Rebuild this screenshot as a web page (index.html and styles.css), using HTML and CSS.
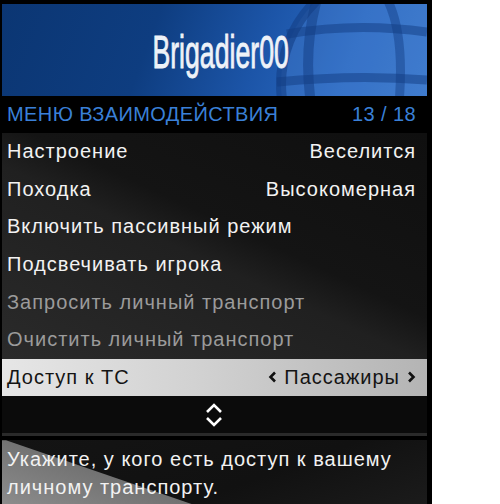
FILE: index.html
```html
<!DOCTYPE html>
<html lang="ru">

<head>
    <meta charset="UTF-8">
    <meta name="viewport" content="width=device-width, initial-scale=1.0">
    <title>Меню взаимодействия</title>
    <link rel="stylesheet" href="styles.css">
</head>

<body>
    <div class="menu">
        <div class="banner">
            <svg class="globe" width="160" height="92" viewBox="0 0 160 92">
                <circle cx="130" cy="80" r="116" fill="rgba(110,160,235,0.18)" stroke="rgba(18,60,130,0.55)" stroke-width="10"/>
                <path d="M20 30 Q90 18 160 28" fill="none" stroke="rgba(18,60,130,0.5)" stroke-width="9"/>
                <path d="M10 78 Q90 70 160 76" fill="none" stroke="rgba(18,60,130,0.5)" stroke-width="9"/>
                <path d="M50 -5 Q36 45 44 100" fill="none" stroke="rgba(18,60,130,0.5)" stroke-width="10"/>
                <path d="M120 -5 Q138 30 132 100" fill="none" stroke="rgba(18,60,130,0.45)" stroke-width="9"/>
            </svg>
            <span class="title">Brigadier00</span>
        </div>

        <div class="header">
            <span>МЕНЮ ВЗАИМОДЕЙСТВИЯ</span>
            <span>13 / 18</span>
        </div>

        <div class="items">
            <div class="item"><span>Настроение</span><span>Веселится</span></div>
            <div class="item"><span>Походка</span><span>Высокомерная</span></div>
            <div class="item"><span>Включить пассивный режим</span></div>
            <div class="item"><span>Подсвечивать игрока</span></div>
            <div class="item disabled"><span>Запросить личный транспорт</span></div>
            <div class="item disabled"><span>Очистить личный транспорт</span></div>
            <div class="item selected">
                <span>Доступ к ТС</span>
                <span class="choice">
                    <svg width="9" height="12" viewBox="0 0 9 12"><path d="M7 1.5 L2.5 6 L7 10.5" fill="none" stroke="#111" stroke-width="2.6"/></svg>
                    <span>Пассажиры</span>
                    <svg width="9" height="12" viewBox="0 0 9 12"><path d="M2 1.5 L6.5 6 L2 10.5" fill="none" stroke="#111" stroke-width="2.6"/></svg>
                </span>
            </div>
        </div>

        <div class="scroll">
            <svg width="18" height="26" viewBox="0 0 18 26">
                <path d="M2 10 L9 3 L16 10" fill="none" stroke="#fff" stroke-width="2.6"/>
                <path d="M2 16 L9 23 L16 16" fill="none" stroke="#fff" stroke-width="2.6"/>
            </svg>
        </div>
        <div class="separator"></div>

        <div class="description">
            <span class="description-text">Укажите, у кого есть доступ к вашему личному транспорту.</span>
        </div>
    </div>
</body>

</html>
```

FILE: styles.css
```css
body {
    margin: 0;
    padding: 0;
    background-color: #fff;
    font-family: "Liberation Sans", Arial, sans-serif;
}

.menu {
    width: 425px;
    height: 500px;
    padding: 4px 5px 0 2px;
    background-color: #000;
    color: #f0f0f0;
    overflow: hidden;
}

.banner {
    position: relative;
    height: 92px;
    display: flex;
    align-items: center;
    justify-content: center;
    overflow: hidden;
    background: linear-gradient(110deg, #0b3673 0%, #0e3d80 35%, #1c55a8 60%, #2a68c0 80%, #3674c8 100%);
}

.globe {
    position: absolute;
    right: 0;
    top: 0;
}

.title {
    position: relative;
    display: inline-block;
    margin-left: 12px;
    margin-top: 4px;
    font-size: 46px;
    color: #eef2f8;
    -webkit-text-stroke: 0.9px #eef2f8;
    transform: scaleX(0.58);
}

.header {
    height: 37px;
    display: flex;
    align-items: center;
    justify-content: space-between;
    padding: 0 11px 0 5px;
    color: #3a80d8;
    font-size: 20px;
    letter-spacing: 0.4px;
}

.items {
    background: linear-gradient(205deg, #0f0f0f 0%, #141414 40%, #202020 50%, #2c2c2c 100%);
}

.item {
    height: 37.6px;
    display: flex;
    align-items: center;
    justify-content: space-between;
    padding: 0 11px 0 5px;
    font-size: 20px;
    letter-spacing: 1px;
    color: #f2f2f2;
}

.item.disabled {
    color: #9b9b9b;
}

.item.selected {
    background: linear-gradient(90deg, #e6e6e6 0%, #d2d2d2 45%, #b4b4b4 100%);
    color: #141414;
}

.choice {
    display: flex;
    align-items: center;
    gap: 7px;
}

.scroll {
    height: 37px;
    display: flex;
    align-items: center;
    justify-content: center;
    background-color: #0b0b0b;
    padding-right: 2px;
}

.separator {
    height: 3px;
    background-color: #2a2a2a;
    margin-bottom: 4px;
}

.description {
    position: relative;
    height: 64px;
    box-sizing: border-box;
    padding: 5px 20px 0 5px;
    font-size: 20px;
    line-height: 28px;
    letter-spacing: 1px;
    color: #f2f2f2;
    background: linear-gradient(160deg, #141414 0%, #111 60%, #1b1b1b 100%);
}

/* grey wedge in the lower-left corner */
.description::before {
    content: "";
    position: absolute;
    left: 0;
    top: 0;
    width: 100%;
    height: 100%;
    background: linear-gradient(200deg, #5a5a5a 0%, #6a6a6a 60%, #8c8c8c 100%);
    clip-path: polygon(0 0, 4px 0, 190px 64px, 0 64px);
}

.description-text {
    position: relative;
}
```
